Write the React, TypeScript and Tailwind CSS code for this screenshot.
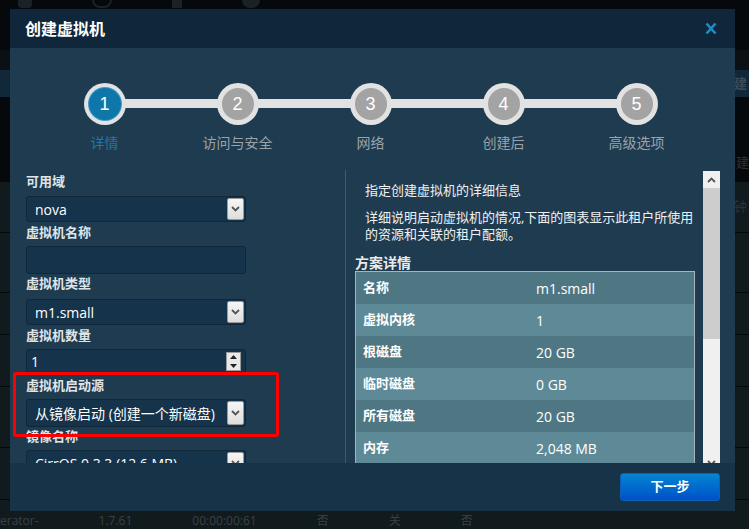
import React from "react";

const F = { fontFamily: '"Open Sans", "Noto Sans CJK SC", sans-serif' };

function Chevron({ up = false }: { up?: boolean }) {
  return (
    <svg width="9" height="6" viewBox="0 0 9 6">
      <path d={up ? "M1 5 L4.5 1.5 L8 5" : "M1 1 L4.5 4.5 L8 1"} stroke="#555" strokeWidth="1.8" fill="none" />
    </svg>
  );
}

function Select({ value, h = "h-[26px]" }: { value: string; h?: string }) {
  return (
    <div className={`flex w-[220px] ${h} items-stretch rounded-[3px] border border-[#0f2738] bg-[#15334a]`}>
      <div className="flex flex-1 items-center pl-[8px] text-[14px] text-white">{value}</div>
      <div className="my-[1px] mr-[1px] flex w-[17px] items-center justify-center rounded-[2px] border border-[#9a9a9a] bg-gradient-to-b from-[#f6f6f6] to-[#dedede]">
        <Chevron />
      </div>
    </div>
  );
}

function Label({ children }: { children: React.ReactNode }) {
  return <div className="h-[18px] text-[13px] font-bold leading-[18px] text-[#dfe4e7]">{children}</div>;
}

const steps = ["详情", "访问与安全", "网络", "创建后", "高级选项"];

const rows: [string, string][] = [
  ["名称", "m1.small"],
  ["虚拟内核", "1"],
  ["根磁盘", "20 GB"],
  ["临时磁盘", "0 GB"],
  ["所有磁盘", "20 GB"],
  ["内存", "2,048 MB"],
];

export default function App() {
  return (
    <div className="relative h-[529px] w-[749px] overflow-hidden bg-[#05090c]" style={F}>
      {/* background page */}
      <div className="flex h-full flex-col">
        <div className="flex h-[50px] items-start gap-[60px] pl-[18px] pt-0">
          <div className="h-[8px] w-[14px] rounded-b bg-[#1a2228]" />
          <div className="h-[8px] w-[20px] rounded-b-full border-2 border-t-0 border-[#1a2228]" />
          <div className="h-[8px] w-[10px] bg-[#1a2228]" />
          <div className="h-[8px] w-[18px] rounded-b-full bg-[#1a2228]" />
        </div>
        <div className="h-[20px] bg-[#0a1013]" />
        <div className="flex h-[27px] items-center justify-end bg-[#10283a] pr-[2px] text-[13px] font-bold text-[#3a4c58]">创建</div>
        <div className="flex h-[85px] items-end justify-end bg-[#05090c] pb-[10px] text-[13px] text-[#2a3238]">创建</div>
        <div className="flex h-[51px] items-center justify-end border-b border-[#05080a] bg-[#111a1d] pr-[2px] text-[13px] text-[#2a3438]">分钟</div>
        <div className="h-[60px] border-b border-[#05080a] bg-[#111a1d]" />
        <div className="h-[42px] border-b border-[#05080a] bg-[#111a1d]" />
        <div className="h-[52px] border-b border-[#05080a] bg-[#111a1d]" />
        <div className="h-[61px] border-b border-[#05080a] bg-[#111a1d]" />
        <div className="h-[52px] border-b border-[#05080a] bg-[#111a1d]" />
        <div className="flex flex-1 items-end gap-[60px] bg-[#111a1d] pb-[1px] text-[12px] leading-[15px] text-[#3a4246]">
          <span>erator-</span>
          <span>1.7.61</span>
          <span>00:00:00:61</span>
          <span>否</span>
          <span>关</span>
          <span>否</span>
        </div>
      </div>

      {/* modal */}
      <div className="absolute left-[10px] top-[9px] flex h-[502px] w-[725px] flex-col">
        <div className="flex h-[39px] shrink-0 items-center justify-between bg-[#10263a] pl-[15px] pr-[18px]">
          <div className="text-[16px] font-bold text-white">创建虚拟机</div>
          <svg width="12" height="13" viewBox="0 0 12 13">
            <path d="M1.5 1.5 L10.5 11.5 M10.5 1.5 L1.5 11.5" stroke="#1b8dc7" strokeWidth="2.6" />
          </svg>
        </div>

        <div className="flex min-h-0 flex-1 flex-col bg-[#1f3b50]">
          {/* steps */}
          <div className="relative h-[122px] shrink-0 pl-[28px] pt-[35px]">
            <div className="absolute left-[95px] top-[51px] h-[9px] w-[532px] bg-[#e2e2e2]" />
            <div className="relative flex">
              {steps.map((s, i) => (
                <div key={s} className="flex w-[133px] flex-col items-center">
                  <div className="flex h-[42px] w-[42px] items-center justify-center rounded-full bg-[#e2e2e2]">
                    <div
                      className={`flex h-[32px] w-[32px] items-center justify-center rounded-full text-[18px] text-white ${
                        i === 0 ? "bg-[#0e76a8] ring-1 ring-[#3a9ccb]" : "bg-[#a3a3a3]"
                      }`}
                      style={{ fontFamily: '"Liberation Sans", sans-serif' }}
                    >
                      {i + 1}
                    </div>
                  </div>
                  <div className={`mt-[8px] text-[14px] leading-[20px] ${i === 0 ? "text-[#1b78a7]" : "text-[#9aa3a9]"}`}>{s}</div>
                </div>
              ))}
            </div>
          </div>

          {/* content */}
          <div className="flex min-h-0 flex-1 overflow-hidden">
            <div className="w-[335px] shrink-0 pl-[16px] pt-[2px]">
              <Label>可用域</Label>
              <div className="mt-[6px] mb-[1px]"><Select value="nova" /></div>
              <Label>虚拟机名称</Label>
              <div className="mt-[5px] h-[28px] w-[220px] rounded-[3px] border border-[#0f2738] bg-[#15334a]" />
              <Label>虚拟机类型</Label>
              <div className="mt-[7px] mb-[1px]"><Select value="m1.small" /></div>
              <Label>虚拟机数量</Label>
              <div className="mt-[5px] flex h-[25px] w-[220px] items-center justify-between rounded-[3px] border border-[#0f2738] bg-[#15334a] pl-[4px] pr-[4px]">
                <span className="text-[14px] text-white">1</span>
                <div className="flex h-[19px] w-[15px] flex-col items-center justify-around border border-[#9a9a9a] bg-[#e9e9e9]">
                  <svg width="7" height="4" viewBox="0 0 7 4"><path d="M0 4 L3.5 0 L7 4Z" fill="#222" /></svg>
                  <svg width="7" height="4" viewBox="0 0 7 4"><path d="M0 0 L3.5 4 L7 0Z" fill="#222" /></svg>
                </div>
              </div>
              <div className="pt-[2px]"><Label>虚拟机启动源</Label></div>
              <div className="mt-[5px]"><Select value="从镜像启动 (创建一个新磁盘)" h="h-[28px]" /></div>
              <Label>镜像名称</Label>
              <div className="mt-[5px]"><Select value="CirrOS 0.3.3 (12.6 MB)" /></div>
            </div>

            <div className="flex flex-1 border-l border-[#3e5a6d] pl-[9px] pr-[15px]">
              <div className="w-[340px] shrink-0 text-[13px] text-[#eef1f3]">
                <div className="mt-[11px] pl-[10px] leading-[18px]">指定创建虚拟机的详细信息</div>
                <div className="mt-[10px] pl-[10px] leading-[17px]">
                  详细说明启动虚拟机的情况,下面的图表显示此租户所使用
                  <br />
                  的资源和关联的租户配额。
                </div>
                <div className="mt-[12px] text-[14px] font-bold leading-[16px] text-[#e8ecee]">方案详情</div>
                <div className="border border-[#a7b4ba]">
                  {rows.map(([k, v], i) => (
                    <div
                      key={k}
                      className={`flex h-[32px] items-center ${i % 2 === 0 ? "bg-[#4e7783]" : "bg-[#5d8a96]"}`}
                    >
                      <div className="w-[180px] pl-[7px] text-[13px] font-bold text-white">{k}</div>
                      <div className="text-[14px] text-white">{v}</div>
                    </div>
                  ))}
                </div>
              </div>
              <div className="ml-[8px] mt-[1px] flex h-[300px] w-[17px] shrink-0 flex-col bg-[#f0f0f0]">
                <div className="flex h-[17px] items-center justify-center"><Chevron up /></div>
                <div className="h-[151px] bg-[#cdcdcd]" />
                <div className="flex-1" />
                <div className="flex h-[17px] items-center justify-center"><Chevron /></div>
              </div>
            </div>
          </div>
        </div>

        <div className="flex h-[48px] shrink-0 items-start justify-end bg-[#163347] pr-[15px] pt-[10px]">
          <div className="flex h-[28px] w-[100px] items-center justify-center rounded-[3px] border border-[#0a5fb8] bg-gradient-to-b from-[#0a84d2] to-[#0050c9] text-[13px] font-bold text-white">
            下一步
          </div>
        </div>

        {/* annotation */}
        <div className="pointer-events-none absolute left-[3px] top-[363px] h-[65px] w-[266px] rounded-[3px] border-[3px] border-[#ff0000]" />
      </div>
    </div>
  );
}
